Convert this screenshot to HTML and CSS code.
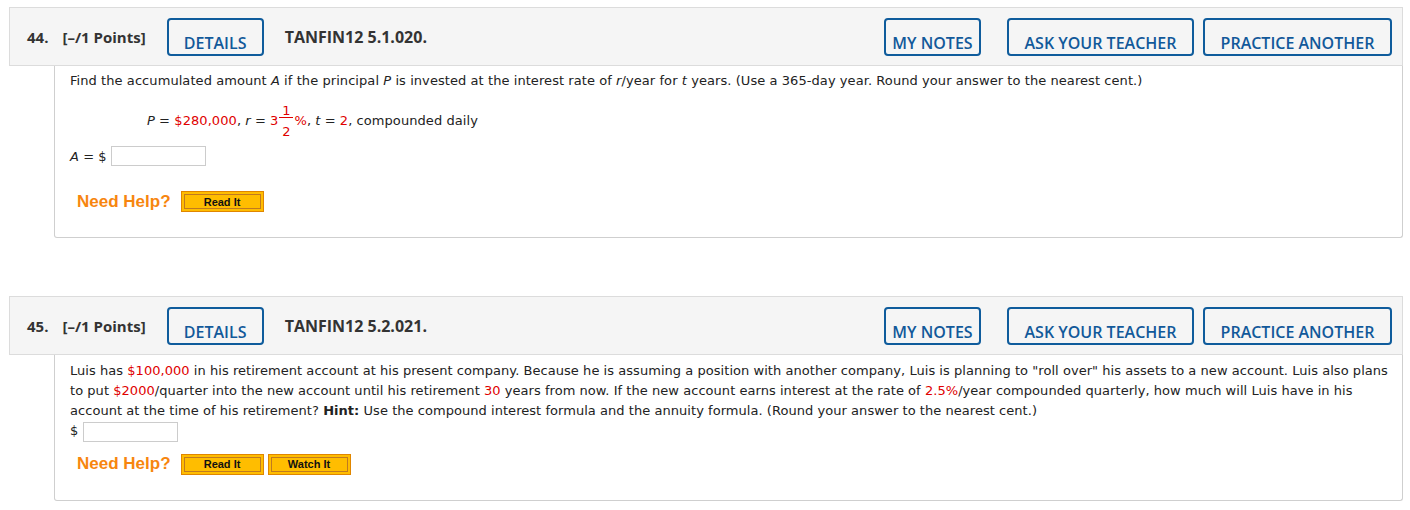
FILE: index.html
```html
<!DOCTYPE html>
<html>
<head>
<meta charset="utf-8">
<link rel="stylesheet" href="styles.css">
</head>
<body>
<div class="question q44">
  <div class="qhead">
    <span class="qnum">44.</span>
    <span class="qpts">[–/1 Points]</span>
    <span class="btn btn-details">DETAILS</span>
    <span class="qcode">TANFIN12 5.1.020.</span>
    <span class="spacer"></span>
    <span class="btn btn-notes">MY NOTES</span>
    <span class="btn btn-ask">ASK YOUR TEACHER</span>
    <span class="btn btn-practice">PRACTICE ANOTHER</span>
  </div>
  <div class="qbody body44">
    <p class="prompt">Find the accumulated amount <i>A</i> if the principal <i>P</i> is invested at the interest rate of <i>r</i>/year for <i>t</i> years. (Use a 365-day year. Round your answer to the nearest cent.)</p>
    <p class="formula"><i>P</i> = <span class="red">$280,000</span>, <i>r</i> = <span class="red">3<span class="frac"><span class="num">1</span><span class="den">2</span></span>%</span>, <i>t</i> = <span class="red">2</span>, compounded daily</p>
    <div class="answer"><i>A</i>&nbsp;= $ <span class="input"></span></div>
    <div class="help">
      <span class="need">Need Help?</span>
      <span class="hbtn"><span class="hin">Read It</span></span>
    </div>
  </div>
</div>

<div class="question q45">
  <div class="qhead">
    <span class="qnum">45.</span>
    <span class="qpts">[–/1 Points]</span>
    <span class="btn btn-details">DETAILS</span>
    <span class="qcode">TANFIN12 5.2.021.</span>
    <span class="spacer"></span>
    <span class="btn btn-notes">MY NOTES</span>
    <span class="btn btn-ask">ASK YOUR TEACHER</span>
    <span class="btn btn-practice">PRACTICE ANOTHER</span>
  </div>
  <div class="qbody body45">
    <p class="prompt2">Luis has <span class="red">$100,000</span> in his retirement account at his present company. Because he is assuming a position with another company, Luis is planning to "roll over" his assets to a new account. Luis also plans to put <span class="red">$2000</span>/quarter into the new account until his retirement <span class="red">30</span> years from now. If the new account earns interest at the rate of <span class="red">2.5%</span>/year compounded quarterly, how much will Luis have in his account at the time of his retirement? <b>Hint:</b> Use the compound interest formula and the annuity formula. (Round your answer to the nearest cent.)<br>$<span class="input"></span></p>
    <div class="help help2">
      <span class="need">Need Help?</span>
      <span class="hbtn"><span class="hin">Read It</span></span>
      <span class="hbtn"><span class="hin">Watch It</span></span>
    </div>
  </div>
</div>
</body>
</html>
```

FILE: styles.css
```css
html, body {
  margin: 0;
  padding: 0;
  background: #fff;
}
body {
  width: 1410px;
  height: 510px;
  overflow: hidden;
  padding-top: 7px;
  font-family: "DejaVu Sans", Verdana, sans-serif;
  color: #333;
}
.question {
  margin-left: 9px;
  width: 1394px;
}
.q45 {
  margin-top: 58px;
}
.qhead {
  box-sizing: border-box;
  height: 59px;
  background: #f5f5f5;
  border: 1px solid #dcdcdc;
  display: flex;
  align-items: center;
  padding: 0 10px 0 17px;
  font-family: "Open Sans", sans-serif;
  color: #333;
}
.qnum {
  font-weight: 700;
  font-size: 15px;
  margin-right: 14px;
}
.qpts {
  font-weight: 700;
  font-size: 15px;
  margin-right: 21px;
}
.qcode {
  font-weight: 700;
  font-size: 16px;
  margin-left: 21px;
}
.spacer {
  flex: 1;
}
.btn {
  box-sizing: border-box;
  height: 38px;
  border: 2px solid #0f5c9c;
  border-radius: 4px;
  color: #12599a;
  font-weight: 600;
  font-size: 16px;
  display: flex;
  align-items: flex-end;
  justify-content: center;
  padding-bottom: 1px;
  line-height: 20px;
}
.btn-details { width: 97px; }
.btn-notes { width: 97px; }
.btn-ask { width: 187px; margin-left: 26px; }
.btn-practice { width: 189px; margin-left: 9px; }

.qbody {
  box-sizing: border-box;
  margin-left: 45px;
  width: 1349px;
  border: 1px solid #cfcfcf;
  border-top: none;
  border-radius: 0 0 3px 3px;
  padding: 6px 5px 0 15px;
  font-size: 13px;
  letter-spacing: 0.07px;
  color: #222;
}
.body44 {
  height: 172px;
}
.body45 {
  height: 146px;
}
.red {
  color: #e00000;
}
.prompt {
  margin: 0;
  line-height: 18px;
}
.formula {
  margin: 14px 0 0 77px;
  line-height: 18px;
}
.frac {
  display: inline-flex;
  flex-direction: column;
  align-items: center;
  vertical-align: 10px;
  line-height: 13px;
  margin: 0 1px;
}
.frac .num {
  border-bottom: 1px solid #e00000;
  padding: 0 1px;
  width: 12px;
  text-align: center;
}
.frac .den {
  padding: 7px 1px 0;
}
.answer {
  margin-top: 7px;
  display: flex;
  align-items: center;
  height: 22px;
}
.input {
  display: inline-block;
  box-sizing: border-box;
  width: 95px;
  height: 20px;
  border: 1px solid #cccccc;
  background: #fff;
  vertical-align: middle;
  margin-left: 4px;
}
.help {
  display: flex;
  align-items: center;
  margin: 24px 0 0 7px;
}
.need {
  font-family: "Liberation Sans", Arial, sans-serif;
  font-weight: 700;
  font-size: 17px;
  letter-spacing: 0;
  color: #f7860f;
  margin-right: 10px;
}
.hbtn {
  box-sizing: border-box;
  width: 83px;
  height: 21px;
  border: 1px solid #e08600;
  background: #ffbd00;
  padding: 2px;
  margin-right: 4px;
  display: flex;
}
.hin {
  flex: 1;
  border: 1px solid #c07a20;
  font-family: "Liberation Sans", Arial, sans-serif;
  font-weight: 700;
  font-size: 11px;
  letter-spacing: 0;
  color: #111;
  display: flex;
  align-items: center;
  justify-content: center;
}
.prompt2 {
  margin: 0;
  line-height: 20px;
  letter-spacing: 0.045px;
}
.prompt2 .input {
  margin-left: 5px;
}
.help2 {
  margin-top: 12px;
}
```
